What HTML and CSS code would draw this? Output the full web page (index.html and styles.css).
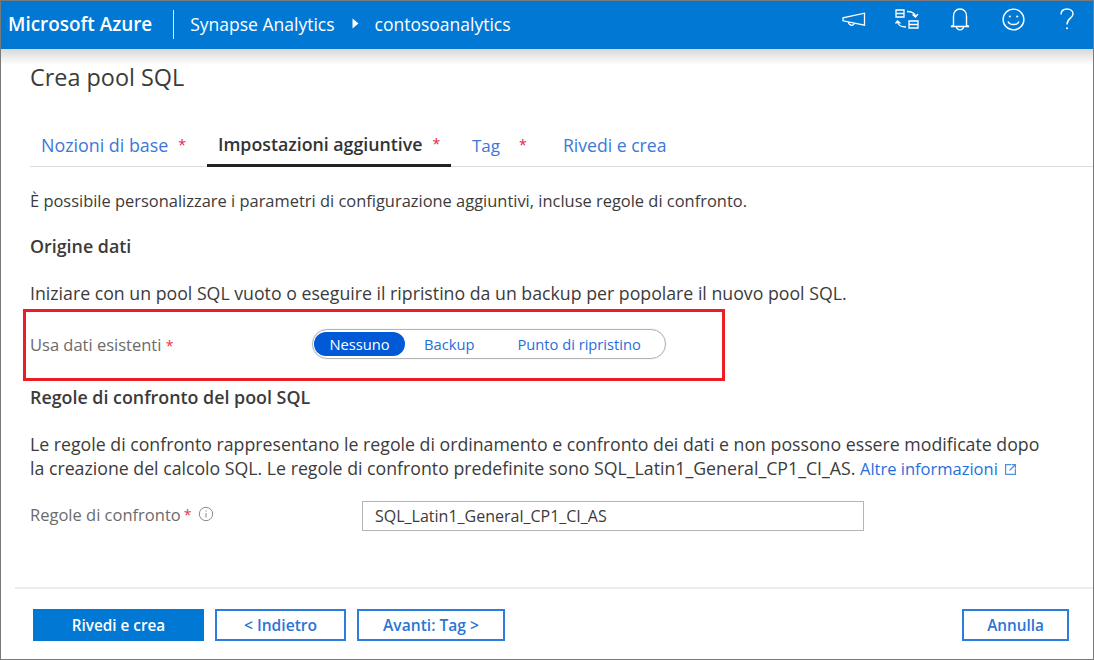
FILE: index.html
```html
<!DOCTYPE html>
<html lang="it">
<head>
    <meta charset="UTF-8">
    <meta name="viewport" content="width=device-width, initial-scale=1.0">
    <title>Crea pool SQL</title>
    <link rel="stylesheet" href="styles.css">
</head>
<body>
    <header class="topbar">
        <span class="brand">Microsoft Azure</span>
        <span class="crumb">Synapse Analytics</span>
        <svg class="crumb-arrow" width="7" height="11" viewBox="0 0 7 11"><path d="M0.5 0.5L6.5 5.5L0.5 10.5Z" fill="#fff"/></svg>
        <span class="crumb-last">contosoanalytics</span>
        <nav class="topbar-icons">
            <svg class="icon-megaphone" width="24" height="16" viewBox="0 0 24 16" fill="none" stroke="#fff" stroke-width="1.3">
                <path d="M22.5 1.2V13.2L1 8.8V5.8Z"/>
                <path d="M6.5 10C6.8 13.6 11.4 14.6 12.4 11.4"/>
            </svg>
            <svg class="icon-switch" width="24" height="20" viewBox="0 0 24 20" fill="none" stroke="#fff" stroke-width="1.3">
                <path d="M1 1H9V8H1ZM1 4.5H9"/>
                <path d="M14 12H23V19H14ZM14 15.5H23"/>
                <path d="M12 2.5C16 2.5 19.5 3 20.5 7.5M17.5 5.5L20.5 8L23 5"/>
                <path d="M11 18C6 18 3 17 2.5 12.5M0.5 14.5L2.5 12L5.5 14.5"/>
            </svg>
            <svg class="icon-bell" width="20" height="23" viewBox="0 0 20 23" fill="none" stroke="#fff" stroke-width="1.4">
                <path d="M3.5 17.5V8.5C3.5 4 6 1 10 1S16.5 4 16.5 8.5V17.5L19 18.5H1Z"/>
                <path d="M6.5 18.5C7 23 13 23 13.5 18.5"/>
            </svg>
            <svg class="icon-smile" width="23" height="23" viewBox="0 0 23 23" fill="none" stroke="#fff" stroke-width="1.4">
                <circle cx="11.5" cy="11.5" r="10.4"/>
                <path d="M6 13.5C7.5 17.5 15.5 17.5 17 13.5"/>
                <circle cx="7.8" cy="8.5" r="1.1" fill="#fff" stroke="none"/>
                <circle cx="15.2" cy="8.5" r="1.1" fill="#fff" stroke="none"/>
            </svg>
            <svg class="icon-help" width="14" height="22" viewBox="0 0 14 22" fill="none" stroke="#fff" stroke-width="1.4">
                <path d="M1 6.5C1 3 3.5 1 7 1S13 3 13 6C13 10.5 7 10 7 16.5"/>
                <circle cx="7" cy="20.3" r="1" fill="#fff" stroke="none"/>
            </svg>
        </nav>
    </header>

    <main class="blade">
        <h1 class="blade-title">Crea pool SQL</h1>

        <div class="tabs">
            <a class="tab tab-first">Nozioni di base<span class="tab-star">*</span></a>
            <a class="tab tab-active">Impostazioni aggiuntive<span class="tab-star">*</span></a>
            <a class="tab tab-tag">Tag<span class="tab-star tab-star-wide">*</span></a>
            <a class="tab tab-review">Rivedi e crea</a>
        </div>

        <section class="content">
            <p class="intro">È possibile personalizzare i parametri di configurazione aggiuntivi, incluse regole di confronto.</p>
            <h3 class="heading-source">Origine dati</h3>
            <p class="source-text">Iniziare con un pool SQL vuoto o eseguire il ripristino da un backup per popolare il nuovo pool SQL.</p>

            <div class="highlight">
                <label class="field-label">Usa dati esistenti <span class="req">*</span></label>
                <div class="pill">
                    <span class="pill-item pill-on">Nessuno</span>
                    <span class="pill-item pill-backup">Backup</span>
                    <span class="pill-item pill-point">Punto di ripristino</span>
                </div>
            </div>

            <h3 class="heading-rules">Regole di confronto del pool SQL</h3>
            <p class="rules-text">Le regole di confronto rappresentano le regole di ordinamento e confronto dei dati e non possono essere modificate dopo<br>la creazione del calcolo SQL. Le regole di confronto predefinite sono SQL_Latin1_General_CP1_CI_AS. <a class="more">Altre informazioni<svg class="ext" width="13" height="13" viewBox="0 0 13 13" fill="none" stroke="#4f8fe0" stroke-width="1.2"><path d="M7 1.6H1.6V11.4H11.4V6"/><path d="M5.5 7.5L11 2M7.5 1.6H11.4V5.5"/></svg></a></p>

            <div class="field-row">
                <label class="field-label field-label-short">Regole di confronto<span class="req">*</span>
                    <svg class="info" width="16" height="16" viewBox="0 0 16 16" fill="none" stroke="#8a8a8a" stroke-width="1"><circle cx="8" cy="8" r="6.7"/><path d="M8 7V11.5"/><path d="M8 4.4V5.6"/></svg>
                </label>
                <input class="text-input" type="text" value="SQL_Latin1_General_CP1_CI_AS">
            </div>
        </section>

        <footer class="actions">
            <button class="btn btn-primary">Rivedi e crea</button>
            <button class="btn btn-back">&lt; Indietro</button>
            <button class="btn btn-next">Avanti: Tag &gt;</button>
            <button class="btn btn-cancel">Annulla</button>
        </footer>
    </main>
</body>
</html>
```

FILE: styles.css
```css
* {
    box-sizing: border-box;
}
html, body {
    margin: 0;
    height: 660px;
    overflow: hidden;
}
body {
    display: flex;
    flex-direction: column;
    font-family: "Open Sans", "Noto Sans", sans-serif;
    font-size: 17.73px;
    color: #3b3b3b;
    background: #fff;
    border: 1px solid #7a7a7a;
}

/* barra in alto */
.topbar {
    display: flex;
    align-items: center;
    height: 48px;
    flex: none;
    background: #0078d4;
    color: #fff;
    padding: 0 0 2px 7px;
    font-size: 17.5px;
}
.brand {
    font-weight: 600;
    font-size: 18.9px;
    padding-right: 21px;
    margin-right: 16px;
    height: 29px;
    line-height: 29px;
    border-right: 1px solid #d9ecfa;
}
.crumb-arrow {
    margin: 0 16px 2px 17px;
}
.topbar-icons {
    align-self: flex-start;
    margin-left: auto;
    width: 251px;
    height: 46px;
    position: relative;
}
.topbar-icons svg {
    position: absolute;
}
.icon-megaphone { left: 0; top: 11px; }
.icon-switch { left: 53px; top: 8px; }
.icon-bell { left: 108px; top: 7px; }
.icon-smile { left: 160px; top: 7px; }
.icon-help { left: 218px; top: 7px; }

.blade {
    flex: 1;
    display: flex;
    flex-direction: column;
    background: linear-gradient(#d8d8d8, #ffffff 16px);
}
.blade-title {
    margin: 13px 0 0 29px;
    font-size: 23.4px;
    line-height: 30px;
    font-weight: 400;
    color: #3b3b3b;
}

/* schede */
.tabs {
    display: flex;
    height: 41px;
    margin: 34px 0 0 29px;
    border-bottom: 1px solid #dcdcdc;
    font-size: 17.6px;
    line-height: 38px;
    color: #3b78d8;
}
.tab {
    height: 41px;
    white-space: nowrap;
}
.tab-first {
    width: 177px;
    padding-left: 11px;
    font-size: 17.85px;
}
.tab-active {
    width: 244px;
    padding-left: 11px;
    color: #333;
    font-size: 17.75px;
    font-weight: 600;
    line-height: 36px;
    border-bottom: 3px solid #222;
}
.tab-tag {
    width: 112px;
    padding-left: 21px;
    font-size: 17px;
}
.tab-star {
    color: #e5204a;
    margin-left: 10px;
    font-size: 14px;
    font-weight: 400;
    vertical-align: 2px;
}
.tab-star-wide {
    margin-left: 19px;
}

.content {
    flex: 1;
    padding-left: 29px;
}
.content p, .content h3 {
    margin: 0;
    line-height: 24px;
}
.content h3 {
    font-size: 17.85px;
    font-weight: 600;
    color: #3b3b3b;
}
.intro {
    margin-top: 22px !important;
    font-size: 16.45px;
}
.heading-source { margin-top: 21px !important; }
.source-text { margin-top: 23px !important; }

/* riquadro rosso */
.highlight {
    display: flex;
    align-items: center;
    width: 702px;
    height: 72px;
    margin: 4px 0 0 -7px;
    padding: 0 0 2px 4px;
    border: 3px solid #ed1c24;
}
.field-label {
    color: #6b6b6b;
    font-size: 16.5px;
}
.highlight .field-label {
    width: 282px;
}
.req {
    color: #e8344e;
    font-size: 14px;
}
.pill {
    display: flex;
    align-items: center;
    width: 354px;
    height: 30px;
    padding: 1px;
    border: 1px solid #b3b3b3;
    border-radius: 15px;
    box-shadow: 0 0 1px #bbb;
    font-size: 14.7px;
    color: #1f6fdc;
}
.pill-item {
    line-height: 24px;
    white-space: nowrap;
}
.pill-on {
    width: 91px;
    text-align: center;
    color: #fff;
    background: #0059d6;
    border-radius: 12px;
}
.pill-backup {
    margin-left: 19px;
}
.pill-point {
    margin-left: 43px;
}

.heading-rules { margin-top: 4px !important; }
.rules-text { margin-top: 23px !important; white-space: nowrap; }
.more {
    color: #1f6fdc;
    font-size: 16.5px;
}
.ext {
    margin-left: 6px;
    vertical-align: -1px;
}

.field-row {
    display: flex;
    align-items: center;
    margin-top: 20px;
}
.field-label-short {
    display: flex;
    align-items: center;
    width: 332px;
    margin-bottom: 4px;
}
.field-label-short .req {
    margin-left: 3px;
}
.info {
    margin-left: 7px;
}
.text-input {
    width: 502px;
    height: 30px;
    padding: 0 12px;
    border: 1px solid #b5b5b5;
    font-family: inherit;
    font-size: 16px;
    color: #3b3b3b;
    outline: none;
}

/* pulsanti in basso */
.actions {
    flex: none;
    display: flex;
    height: 72px;
    margin-left: 14px;
    padding: 20px 0 0 18px;
    border-top: 2px solid #ececec;
}
.btn {
    height: 32px;
    margin-right: 11px;
    font-family: inherit;
    font-size: 15.3px;
    font-weight: 600;
    background: #fff;
    color: #2b74d8;
    border: 2px solid #2b7de0;
}
.btn-primary {
    width: 171px;
    background: #0078d4;
    border-color: #0078d4;
    color: #fff;
}
.btn-back {
    width: 131px;
    font-size: 15.6px;
}
.btn-next {
    width: 148px;
    font-size: 15.6px;
}
.btn-cancel {
    width: 107px;
    margin-left: auto;
    margin-right: 24px;
}
```
